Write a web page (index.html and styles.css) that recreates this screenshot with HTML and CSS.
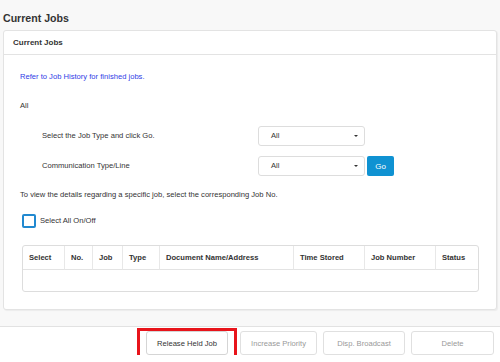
FILE: index.html
```html
<!DOCTYPE html>
<html lang="en">

<head>
    <meta charset="UTF-8">
    <meta name="viewport" content="width=device-width, initial-scale=1.0">
    <title>Current Jobs</title>
    <link rel="stylesheet" href="styles.css">
</head>

<body>

    <div class="main">
        <h1 class="page-title">Current Jobs</h1>

        <!-- Current Jobs Panel -->
        <section class="panel">
            <div class="panel-head">Current Jobs</div>
            <div class="panel-body">
                <p class="note">Refer to Job History for finished jobs.</p>
                <p class="line all">All</p>

                <div class="filter">
                    <span class="filter-label">Select the Job Type and click Go.</span>
                    <div class="select">All<span class="caret"></span></div>
                    <span></span>

                    <span class="filter-label">Communication Type/Line</span>
                    <div class="select">All<span class="caret"></span></div>
                    <button class="go-btn">Go</button>
                </div>

                <p class="line hint">To view the details regarding a specific job, select the corresponding Job No.</p>

                <label class="check-row">
                    <span class="check-box"></span>
                    Select All On/Off
                </label>

                <table class="job-table">
                    <thead>
                        <tr>
                            <th class="c-select">Select</th>
                            <th class="c-no">No.</th>
                            <th class="c-job">Job</th>
                            <th class="c-type">Type</th>
                            <th class="c-doc">Document Name/Address</th>
                            <th class="c-time">Time Stored</th>
                            <th class="c-num">Job Number</th>
                            <th>Status</th>
                        </tr>
                    </thead>
                    <tbody>
                        <tr>
                            <td></td>
                            <td></td>
                            <td></td>
                            <td></td>
                            <td></td>
                            <td></td>
                            <td></td>
                            <td></td>
                        </tr>
                    </tbody>
                </table>
            </div>
        </section>
    </div>

    <!-- Action Bar -->
    <footer class="actions">
        <div class="highlight-wrap">
            <button class="action-btn release-btn">Release Held Job</button>
            <span class="highlight"></span>
        </div>
        <button class="action-btn priority-btn" disabled>Increase Priority</button>
        <button class="action-btn" disabled>Disp. Broadcast</button>
        <button class="action-btn delete-btn" disabled>Delete</button>
    </footer>

</body>

</html>
```

FILE: styles.css
```css
/* Basic layout */
body {
    font-family: "Liberation Sans", Arial, sans-serif;
    font-size: 7.6px;
    color: #333;
    background-color: #fff;
    margin: 0;
    padding: 0;
}

.main {
    background-color: #f8f8f8;
    border-bottom: 1px solid #e2e2e2;
    padding: 0 3px 16px 3px;
}

.page-title {
    margin: 0;
    padding: 10px 0 4px 0;
    font-size: 10.6px;
    line-height: 16px;
    color: #333;
}

/* Panel */
.panel {
    background-color: white;
    border: 1px solid #e3e3e3;
    border-radius: 3px;
    box-shadow: 1px 1px 1px rgba(0, 0, 0, 0.05);
}

.panel-head {
    font-size: 8px;
    font-weight: bold;
    line-height: 23px;
    padding-left: 9px;
    border-bottom: 1px solid #e3e3e3;
}

.panel-body {
    padding: 16px 16px 17px 16px;
}

.note,
.line {
    margin: 0;
    line-height: 12px;
}

.note {
    color: #3140e6;
}

.all {
    margin-top: 17px;
}

/* Filter rows */
.filter {
    display: grid;
    grid-template-columns: 216px 107px auto;
    row-gap: 10px;
    align-items: center;
    margin: 14px 0 0 22px;
}

.filter-label {
    line-height: 12px;
}

.select {
    position: relative;
    height: 20px;
    line-height: 18px;
    box-sizing: border-box;
    border: 1px solid #ddd;
    border-radius: 3px;
    padding-left: 12px;
}

.caret {
    position: absolute;
    right: 6px;
    top: 8px;
    border-left: 2.5px solid transparent;
    border-right: 2.5px solid transparent;
    border-top: 2.5px solid #333;
}

.go-btn {
    width: 27px;
    height: 20px;
    margin-left: 2px;
    padding: 0;
    font-family: inherit;
    font-size: 8px;
    color: white;
    background-color: #0f92d2;
    border: none;
    border-radius: 2px;
}

.hint {
    margin-top: 13px;
}

/* Select all checkbox */
.check-row {
    display: flex;
    align-items: center;
    gap: 4px;
    margin: 13px 0 0 2px;
    line-height: 14px;
}

.check-box {
    width: 14px;
    height: 14px;
    box-sizing: border-box;
    border: 2px solid #2189d0;
    border-radius: 2px;
}

/* Job table */
.job-table {
    margin: 17px 0 0 2px;
    width: 457px;
    border-collapse: separate;
    border-spacing: 0;
    border: 1px solid #ddd;
    border-radius: 3px;
    table-layout: fixed;
}

.job-table th {
    box-sizing: border-box;
    height: 24px;
    padding: 0 0 0 6px;
    text-align: left;
    font-weight: bold;
    white-space: nowrap;
    border-bottom: 1px solid #e3e3e3;
    border-right: 1px solid #e8e8e8;
}

.job-table th:last-child {
    border-right: none;
}

.job-table td {
    height: 21px;
    padding: 0;
}

.c-select { width: 42px; }
.c-no { width: 28px; }
.c-job { width: 30px; }
.c-type { width: 37px; }
.c-doc { width: 134px; }
.c-time { width: 71px; }
.c-num { width: 71px; }

/* Action bar */
.actions {
    display: flex;
    justify-content: flex-end;
    gap: 6px;
    padding: 4px 6px 0 0;
}

.highlight-wrap {
    position: relative;
    margin-right: 6px;
}

.action-btn {
    display: block;
    width: 82px;
    height: 24px;
    padding: 0;
    font-family: inherit;
    font-size: 7.6px;
    color: #999;
    background-color: white;
    border: 1px solid #e0e0e0;
    border-radius: 3px;
}

.release-btn {
    color: #333;
    border-color: #d5d5d5;
}

.priority-btn {
    width: 77px;
}

.delete-btn {
    width: 83px;
}

.highlight {
    position: absolute;
    top: -3px;
    left: -9px;
    right: -9px;
    bottom: -5px;
    border: 3px solid #e8141b;
}
```
